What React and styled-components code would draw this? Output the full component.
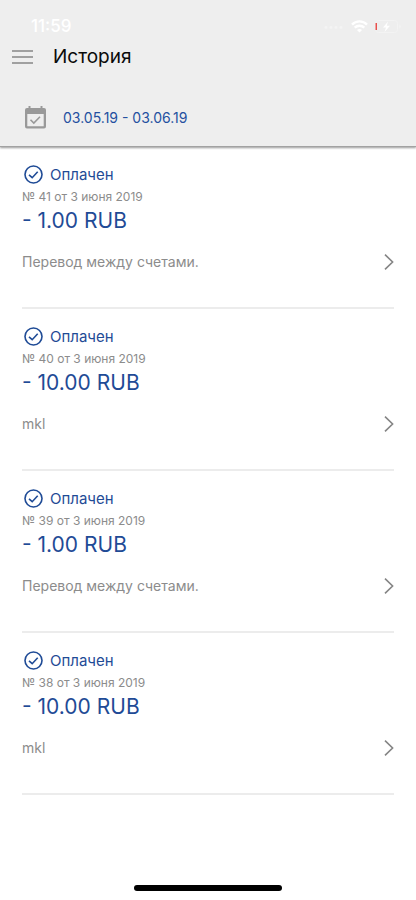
import React from "react";
import styled, { createGlobalStyle } from "styled-components";

const GlobalStyle = createGlobalStyle`
  *, *::before, *::after { box-sizing: border-box; }
  body {
    margin: 0;
    background: #fff;
    font-family: Inter, Roboto, "Liberation Sans", sans-serif;
  }
`;

const PlainButton = styled.button`
  display: flex;
  align-items: center;
  border: 0;
  padding: 0;
  background: none;
  font-family: inherit;
  text-align: left;
  cursor: pointer;
`;

const Screen = styled.div`
  display: flex;
  flex-direction: column;
  min-height: 100vh;
`;

const Header = styled.header`
  background: #eeeeee;
  border-bottom: 1px solid #a2a2a2;
  box-shadow: 0 1px 2px rgba(0, 0, 0, 0.4);
`;

const StatusBar = styled.div`
  display: flex;
  align-items: center;
  justify-content: space-between;
  padding: 16px 14px 0 31px;
  height: 36px;
  color: #fff;
`;

const Clock = styled.span`
  font-size: 17px;
  line-height: 20px;
  font-weight: 500;
`;

const StatusIcons = styled.div`
  display: flex;
  align-items: center;
  gap: 7px;
`;

const TitleBar = styled.div`
  display: flex;
  align-items: center;
  gap: 20px;
  height: 42px;
  padding: 0 12px;
`;

const Title = styled.h1`
  margin: 0;
  font-size: 19px;
  line-height: 24px;
  font-weight: 400;
  color: #0a0a0a;
`;

const PeriodButton = styled(PlainButton)`
  gap: 17px;
  width: 100%;
  height: 68px;
  padding: 12px 25px 0;
  font-size: 14px;
  line-height: 20px;
  color: #2450a0;
`;

const List = styled.ul`
  list-style: none;
  margin: 0;
  padding: 0 22px;
`;

const Item = styled.li`
  height: 162px;
  padding-top: 18px;
  border-bottom: 2px solid #ececec;
`;

const Status = styled.div`
  display: flex;
  align-items: center;
  gap: 7px;
  font-size: 15px;
  line-height: 20px;
  padding-left: 1px;
  color: #1f4b96;
`;

const Meta = styled.div`
  font-size: 12px;
  line-height: 20px;
  margin-top: 2px;
  color: #8c8c8c;
`;

const Amount = styled.div`
  font-size: 21px;
  line-height: 28px;
  color: #1f4b96;
`;

const DetailButton = styled(PlainButton)`
  justify-content: space-between;
  width: 100%;
  margin-top: 16px;
  font-size: 14px;
  line-height: 22px;
  color: #8c8c8c;
`;

const HomeIndicator = styled.div`
  width: 148px;
  height: 6px;
  margin: auto auto 9px;
  border-radius: 3px;
  background: #000;
`;

const StatusGlyphs = () => (
  <StatusIcons>
    <svg width="20" height="6" viewBox="0 0 20 6" fill="#f4f4f4" aria-hidden="true">
      <circle cx="2" cy="4.500" r="1.400" /><circle cx="7" cy="4.500" r="1.400" />
      <circle cx="12" cy="4.500" r="1.400" /><circle cx="17" cy="4.500" r="1.400" />
    </svg>
    <svg width="17" height="13" viewBox="0 0 17 13" fill="none" stroke="#fff" strokeWidth="2.4" aria-hidden="true">
      <path d="M1 4.6C5.2.3 11.8.3 16 4.6" />
      <path d="M3.7 7.7c2.7-2.6 6.9-2.6 9.6 0" />
      <path d="M6 9.9c1.5-1.3 3.5-1.3 5 0L8.5 12.6z" fill="#fff" stroke="none" />
    </svg>
    <svg width="27" height="13" viewBox="0 0 27 13" aria-hidden="true">
      <rect x="0.5" y="0.5" width="22" height="12" rx="3" fill="none" stroke="#f3f3f3" />
      <path d="M24.5 4.5v4c1.5-.5 1.5-3.5 0-4z" fill="#f5f5f5" />
      <rect x="0.5" y="3" width="1.5" height="7" fill="#e8504c" />
      <path d="M13 1.5 8 7.4h3L9.600 12l5.400-6.300h-3.200z" fill="#fff" />
    </svg>
  </StatusIcons>
);

const MenuIcon = () => (
  <svg width="21" height="14" viewBox="0 0 21 14" stroke="#a0a0a0" strokeWidth="2" aria-hidden="true">
    <path d="M0 1h21M0 7h21M0 13h21" />
  </svg>
);

const CalendarIcon = () => (
  <svg width="21" height="24" viewBox="0 0 21 24" fill="none" aria-hidden="true">
    <path fill="#999" fillRule="evenodd" d="M3.5 0h2v2h10V0h2v2H19a2 2 0 0 1 2 2v16.5a2 2 0 0 1-2 2H2a2 2 0 0 1-2-2V4a2 2 0 0 1 2-2h1.5zM2.3 8v12.300h16.400V8z" />
    <path d="m5.5 13.8 3.300 3.300 6.200-6.300" stroke="#999" strokeWidth="1.6" />
  </svg>
);

const PaidIcon = () => (
  <svg width="20" height="20" viewBox="0 0 20 20" fill="none" stroke="#1f4b96" strokeWidth="1.6" aria-hidden="true">
    <circle cx="10.5" cy="9.5" r="8.5" />
    <path d="m6 9.8 3.2 2.900 5.500-6" />
  </svg>
);

const ChevronIcon = () => (
  <svg width="10" height="16" viewBox="0 0 10 16" fill="none" stroke="#858585" strokeWidth="1.6" aria-hidden="true">
    <path d="m1 .6 7.600 7.400L1 15.400" />
  </svg>
);

const payments = [
  { number: 41, amount: "- 1.00 RUB", note: "Перевод между счетами." },
  { number: 40, amount: "- 10.00 RUB", note: "mkl" },
  { number: 39, amount: "- 1.00 RUB", note: "Перевод между счетами." },
  { number: 38, amount: "- 10.00 RUB", note: "mkl" },
];

export default function App() {
  return (
    <Screen>
      <GlobalStyle />
      <Header>
        <StatusBar>
          <Clock>11:59</Clock>
          <StatusGlyphs />
        </StatusBar>
        <TitleBar>
          <PlainButton type="button" aria-label="Меню"><MenuIcon /></PlainButton>
          <Title>История</Title>
        </TitleBar>
        <PeriodButton type="button">
          <CalendarIcon />
          03.05.19 - 03.06.19
        </PeriodButton>
      </Header>
      <List>
        {payments.map((p) => (
          <Item key={p.number}>
            <Status><PaidIcon />Оплачен</Status>
            <Meta>№ {p.number} от 3 июня 2019</Meta>
            <Amount>{p.amount}</Amount>
            <DetailButton type="button">
              <span>{p.note}</span>
              <ChevronIcon />
            </DetailButton>
          </Item>
        ))}
      </List>
      <HomeIndicator />
    </Screen>
  );
}
